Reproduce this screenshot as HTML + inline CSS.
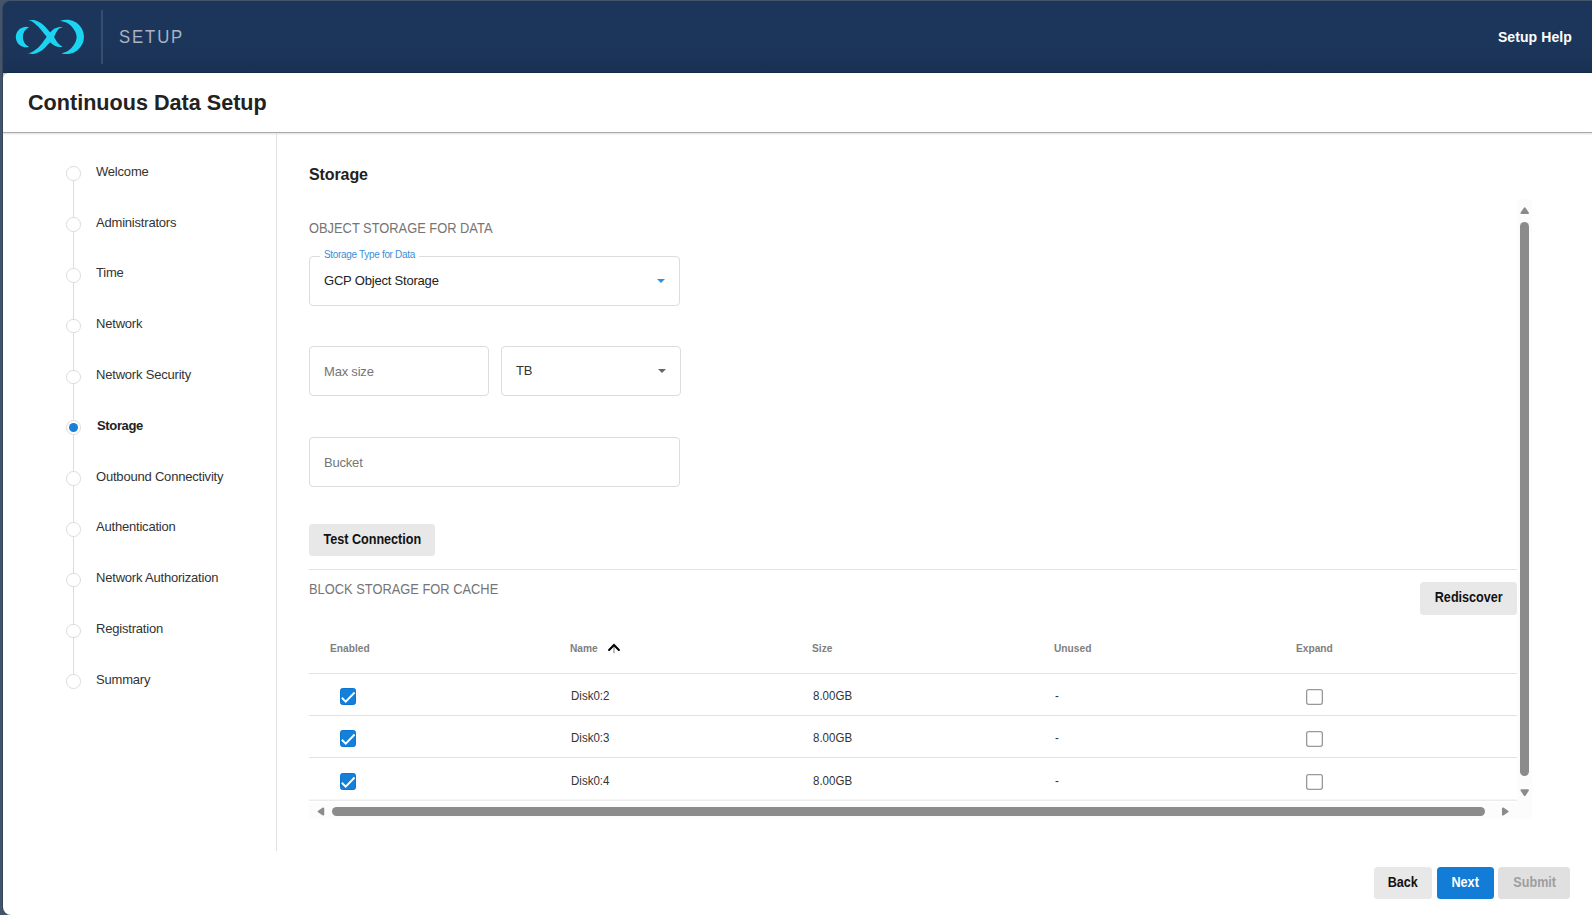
<!DOCTYPE html>
<html lang="en">
<head>
<meta charset="utf-8">
<title>Continuous Data Setup</title>
<style>
*{box-sizing:border-box;margin:0;padding:0}
html,body{width:1592px;height:915px;overflow:hidden}
body{background:#44546b;font-family:"Liberation Sans",sans-serif;color:#222;position:relative}
.abs{position:absolute}
#frame{position:absolute;left:3px;top:1px;width:1589px;height:914px;background:linear-gradient(#1c365b 0,#1c365b 60px,#fff 60px);border-radius:8px 0 0 8px;overflow:hidden;box-shadow:-1px 0 0 #34455d}
#p{position:absolute;left:-3px;top:-1px;width:1592px;height:915px}
#hdr{position:absolute;left:0;top:0;width:1592px;height:73px;background:linear-gradient(180deg,#1c365b 0%,#1c365b 60%,#193153 98%,#112749 100%)}
#hdr .vr{position:absolute;left:101px;top:10px;width:2px;height:54px;background:#364d6f}
#hdr .setup{position:absolute;left:119px;top:27px;font-size:18px;letter-spacing:2px;color:#a9b3c3;line-height:20px;transform:scaleX(.93);transform-origin:0 0}
#hdr .help{position:absolute;right:20px;top:28px;letter-spacing:.1px;font-size:14px;font-weight:bold;color:#fff;line-height:18px}
#title{position:absolute;left:28px;top:89px;font-size:21.6px;font-weight:bold;color:#222;line-height:28px;white-space:nowrap}
#hline{position:absolute;left:3px;top:132px;width:1589px;height:1px;background:#a9a9a9;box-shadow:0 1px 2px rgba(0,0,0,.2)}
#vline{position:absolute;left:276px;top:133px;width:1px;height:718px;background:#e0e0e0}
/* stepper */
#steps .ln{position:absolute;left:73px;top:174px;width:1px;height:507px;background:#dcdcdc}
.st{position:absolute;left:0;height:20px;width:270px}
.st i{position:absolute;left:66px;top:0;width:14.6px;height:14.6px;border-radius:50%;border:1px solid #dcdcdc;background:#fff}
.st.on i:after{content:"";position:absolute;left:1.7px;top:1.7px;width:9.2px;height:9.2px;border-radius:50%;background:#1a7fd6}
.sl{position:absolute;left:96px;font-size:13px;letter-spacing:-.2px;line-height:16px;color:#333;white-space:nowrap}
.sl.on{font-weight:bold;color:#222;left:97px;letter-spacing:-.35px}
/* content */
.h2{position:absolute;left:309px;top:165px;font-size:16px;font-weight:bold;color:#222;line-height:20px;letter-spacing:-.1px}
.sec{position:absolute;left:308.6px;font-size:14px;color:#757575;line-height:18px;white-space:nowrap;transform:scaleX(.919);transform-origin:0 0}
.box{position:absolute;border:1px solid #dcdcdc;border-radius:4px;background:#fff;height:50px}
.box .ph{position:absolute;left:14px;top:15.5px;font-size:13px;letter-spacing:-.2px;line-height:18px;color:#757575;white-space:nowrap}
.box .val{position:absolute;left:14px;top:15px;font-size:13px;letter-spacing:-.2px;line-height:18px;color:#222;white-space:nowrap}
.box .lbl{position:absolute;left:10px;top:-9.5px;padding:0 4px;background:#fff;font-size:10px;letter-spacing:-.32px;line-height:14px;color:#3b8fd6;white-space:nowrap}
.tri{position:absolute;width:0;height:0;border-left:4.5px solid transparent;border-right:4.5px solid transparent;border-top:4.5px solid #666}
.btn{position:absolute;height:32px;border-radius:3.5px;background:#e8e8e8;color:#111;font-size:14px;font-weight:bold;line-height:30px;text-align:center;white-space:nowrap}
.btn span{display:inline-block;transform:scaleX(.9)}
.th{position:absolute;top:641px;font-size:11px;font-weight:bold;color:#808080;line-height:14px;transform:scaleX(.927);transform-origin:0 0;white-space:nowrap}
.td{position:absolute;font-size:12px;color:#333;line-height:14px;white-space:nowrap;transform:scaleX(.96);transform-origin:0 0;margin-left:.5px}
.rl{position:absolute;left:309px;width:1208px;height:1px;background:#e2e2e2}
.cb{position:absolute;width:16px;height:17px}

.ub{position:absolute;width:17px;height:16px}
</style>
</head>
<body>
<div id="frame"><div id="p">
  <div id="hdr">
    <svg class="abs" style="left:12px;top:14px" width="80" height="46" viewBox="12 14 80 46">
      <g fill="#1bd4f1">
        <path d="M29.1 27.2 A10.3 10.3 0 1 0 29.1 46.9 A10.9 10.9 0 0 1 29.1 27.2 Z"/>
        <path d="M28.30 20.10 C29.52 20.17 33.28 19.83 35.60 20.50 C37.92 21.17 40.27 22.67 42.20 24.10 C44.13 25.53 45.87 27.72 47.20 29.10 C48.53 30.48 49.07 31.07 50.20 32.40 C51.33 33.73 52.83 35.47 54.00 37.10 C55.17 38.73 56.15 40.85 57.20 42.20 C58.25 43.55 59.37 44.45 60.30 45.20 C61.23 45.95 62.38 46.45 62.80 46.70 C62.13 46.73 60.15 47.07 58.80 46.90 C57.45 46.73 56.13 46.48 54.70 45.70 C53.27 44.92 51.53 43.63 50.20 42.20 C48.87 40.77 47.87 38.70 46.70 37.10 C45.53 35.50 44.63 34.35 43.20 32.60 C41.77 30.85 39.95 28.45 38.10 26.60 C36.25 24.75 33.73 22.58 32.10 21.50 C30.47 20.42 28.93 20.33 28.30 20.10 Z"/>
        <path d="M27.10 53.50 C28.35 53.53 32.08 54.25 34.60 53.70 C37.12 53.15 40.10 51.62 42.20 50.20 C44.30 48.78 45.87 46.53 47.20 45.20 C48.53 43.87 49.07 43.55 50.20 42.20 C51.33 40.85 53.00 38.70 54.00 37.10 C55.00 35.50 55.33 34.02 56.20 32.60 C57.07 31.18 58.10 29.48 59.20 28.60 C60.30 27.72 62.20 27.52 62.80 27.30 C62.13 27.28 60.15 26.98 58.80 27.20 C57.45 27.42 56.13 27.73 54.70 28.60 C53.27 29.47 51.53 30.98 50.20 32.40 C48.87 33.82 47.87 35.55 46.70 37.10 C45.53 38.65 44.63 39.93 43.20 41.70 C41.77 43.47 40.05 45.95 38.10 47.70 C36.15 49.45 33.33 51.23 31.50 52.20 C29.67 53.17 27.83 53.28 27.10 53.50 Z"/>
        <path d="M60.40 20.72 A17.5 17.2 0 1 1 61.60 53.38 C62.55 53.02 65.70 52.06 67.30 51.20 C68.90 50.34 70.10 49.28 71.20 48.20 C72.30 47.12 73.12 45.90 73.90 44.70 C74.68 43.50 75.45 42.27 75.90 41.00 C76.35 39.73 76.60 38.40 76.60 37.10 C76.60 35.80 76.35 34.47 75.90 33.20 C75.45 31.93 74.68 30.70 73.90 29.50 C73.12 28.30 72.30 27.08 71.20 26.00 C70.10 24.92 69.10 23.88 67.30 23.00 C65.50 22.12 61.55 21.10 60.40 20.72 Z"/>
      </g>
    </svg>
    <div class="vr"></div>
    <div class="setup">SETUP</div>
    <div class="help">Setup Help</div>
  </div>
  <div class="abs" style="left:3px;top:73px;width:4px;height:4px;background:radial-gradient(circle at 100% 100%,#fff 3px,#cdc6bb 3.6px)"></div>
  <div id="title">Continuous Data Setup</div>
  <div id="hline"></div>
  <div id="vline"></div>

  <div id="steps">
    <div class="ln"></div>
    <div class="st" style="top:166.45px"><i></i></div><span class="sl" style="top:163.91px">Welcome</span>
    <div class="st" style="top:217.24px"><i></i></div><span class="sl" style="top:214.91px">Administrators</span>
    <div class="st" style="top:268.03px"><i></i></div><span class="sl" style="top:264.91px">Time</span>
    <div class="st" style="top:318.82px"><i></i></div><span class="sl" style="top:315.91px">Network</span>
    <div class="st" style="top:369.61px"><i></i></div><span class="sl" style="top:366.91px">Network Security</span>
    <div class="st on" style="top:420.40px"><i></i></div><span class="sl on" style="top:417.91px">Storage</span>
    <div class="st" style="top:471.19px"><i></i></div><span class="sl" style="top:468.91px">Outbound Connectivity</span>
    <div class="st" style="top:521.98px"><i></i></div><span class="sl" style="top:518.91px">Authentication</span>
    <div class="st" style="top:572.77px"><i></i></div><span class="sl" style="top:569.91px">Network Authorization</span>
    <div class="st" style="top:623.56px"><i></i></div><span class="sl" style="top:620.91px">Registration</span>
    <div class="st" style="top:674.35px"><i></i></div><span class="sl" style="top:671.91px">Summary</span>
  </div>

  <div class="h2">Storage</div>
  <div class="sec" style="top:219px">OBJECT STORAGE FOR DATA</div>

  <div class="box" style="left:309px;top:256px;width:371px">
    <div class="lbl">Storage Type for Data</div>
    <div class="val">GCP Object Storage</div>
    <div class="tri" style="left:346.5px;top:22px;border-top-color:#2f8fe0"></div>
  </div>
  <div class="box" style="left:309px;top:346px;width:180px"><div class="ph">Max size</div></div>
  <div class="box" style="left:501px;top:346px;width:180px"><div class="val" style="top:14.6px;color:#333">TB</div><div class="tri" style="left:155.5px;top:22px"></div></div>
  <div class="box" style="left:309px;top:437px;width:371px"><div class="ph">Bucket</div></div>

  <div class="btn" style="left:309px;top:524px;width:126px;height:32px;line-height:30.4px"><span>Test Connection</span></div>
  <div class="rl" style="top:569px"></div>
  <div class="sec" style="top:580px">BLOCK STORAGE FOR CACHE</div>
  <div class="btn" style="left:1420px;top:582px;width:97px;height:33px;line-height:31.6px"><span>Rediscover</span></div>

  <div class="th" style="left:330px">Enabled</div>
  <div class="th" style="left:570px">Name</div>
  <svg class="abs" style="left:606px;top:641px" width="16" height="15" viewBox="0 0 16 15"><path d="M8 6 V12.2" fill="none" stroke="#a6a6a6" stroke-width="1.5"/><path d="M3.1 8.9 L8 4 L12.9 8.9" fill="none" stroke="#000" stroke-width="2.1" stroke-linecap="round" stroke-linejoin="miter"/></svg>
  <div class="th" style="left:812px">Size</div>
  <div class="th" style="left:1054px">Unused</div>
  <div class="th" style="left:1296px">Expand</div>
  <div class="rl" style="top:673px"></div>
  <div class="rl" style="top:715px"></div>
  <div class="rl" style="top:757px"></div>
  <div class="rl" style="top:799px;height:2px;background:linear-gradient(#f5f5f5 50%,#ececec 50%)"></div>

  <svg class="cb" style="left:340px;top:688px" viewBox="0 0 16 17"><rect x=".5" y=".5" width="15" height="16" rx="2" fill="#1580d9" stroke="#0b76d2" stroke-width="1"/><path d="M1.8 9.8 L5.7 13.6 L14.6 4.5" fill="none" stroke="#fff" stroke-width="1.9"/></svg>
  <svg class="cb" style="left:340px;top:730px" viewBox="0 0 16 17"><rect x=".5" y=".5" width="15" height="16" rx="2" fill="#1580d9" stroke="#0b76d2" stroke-width="1"/><path d="M1.8 9.8 L5.7 13.6 L14.6 4.5" fill="none" stroke="#fff" stroke-width="1.9"/></svg>
  <svg class="cb" style="left:340px;top:772.5px" viewBox="0 0 16 17"><rect x=".5" y=".5" width="15" height="16" rx="2" fill="#1580d9" stroke="#0b76d2" stroke-width="1"/><path d="M1.8 9.8 L5.7 13.6 L14.6 4.5" fill="none" stroke="#fff" stroke-width="1.9"/></svg>

  <div class="td" style="left:570px;top:689px">Disk0:2</div>
  <div class="td" style="left:570px;top:731px">Disk0:3</div>
  <div class="td" style="left:570px;top:774px">Disk0:4</div>
  <div class="td" style="left:812px;top:689px">8.00GB</div>
  <div class="td" style="left:812px;top:731px">8.00GB</div>
  <div class="td" style="left:812px;top:774px">8.00GB</div>
  <div class="td" style="left:1054px;top:689px">-</div>
  <div class="td" style="left:1054px;top:731px">-</div>
  <div class="td" style="left:1054px;top:774px">-</div>
  <svg class="ub" style="left:1306px;top:689px" viewBox="0 0 17 16"><rect x=".65" y=".65" width="15.7" height="14.7" rx="2" fill="#fff" stroke="#999" stroke-width="1.3"/></svg>
  <svg class="ub" style="left:1306px;top:731px" viewBox="0 0 17 16"><rect x=".65" y=".65" width="15.7" height="14.7" rx="2" fill="#fff" stroke="#999" stroke-width="1.3"/></svg>
  <svg class="ub" style="left:1306px;top:773.5px" viewBox="0 0 17 16"><rect x=".65" y=".65" width="15.7" height="14.7" rx="2" fill="#fff" stroke="#999" stroke-width="1.3"/></svg>

  <!-- scrollbars -->
  <div class="abs" style="left:1517px;top:199px;width:15px;height:620px;background:#fcfcfc"></div>
  <div class="abs" style="left:309px;top:803px;width:1223px;height:16px;background:#fcfcfc"></div>
  <div class="abs" style="left:1520px;top:222px;width:9px;height:554px;border-radius:5px;background:#8b8b8b"></div>
  <div class="abs" style="left:332px;top:807px;width:1153px;height:9px;border-radius:4.5px;background:#8b8b8b"></div>
  <svg class="abs" style="left:1517px;top:201px" width="15" height="16" viewBox="0 0 15 16"><path d="M4.4 12 L7.7 7.2 L11 12 Z" fill="#8b8b8b" stroke="#8b8b8b" stroke-width="1.9" stroke-linejoin="round"/></svg>
  <svg class="abs" style="left:1517px;top:784px" width="15" height="16" viewBox="0 0 15 16"><path d="M4.4 6.3 L11 6.3 L7.7 11.1 Z" fill="#8b8b8b" stroke="#8b8b8b" stroke-width="1.9" stroke-linejoin="round"/></svg>
  <svg class="abs" style="left:313px;top:803px" width="16" height="16" viewBox="0 0 16 16"><path d="M10.3 5.4 L10.3 11.6 L5.6 8.5 Z" fill="#8b8b8b" stroke="#8b8b8b" stroke-width="1.9" stroke-linejoin="round"/></svg>
  <svg class="abs" style="left:1497px;top:803px" width="16" height="16" viewBox="0 0 16 16"><path d="M5.9 5.4 L5.9 11.6 L10.6 8.5 Z" fill="#8b8b8b" stroke="#8b8b8b" stroke-width="1.9" stroke-linejoin="round"/></svg>

  <div class="btn" style="left:1374px;top:867px;width:58px"><span>Back</span></div>
  <div class="btn" style="left:1437px;top:867px;width:57px;background:#137cd6;color:#fff"><span>Next</span></div>
  <div class="btn" style="left:1498px;top:867px;width:72px;background:#e0e0e0;color:#9e9e9e"><span style="margin-left:2px">Submit</span></div>
</div></div>
</body>
</html>
